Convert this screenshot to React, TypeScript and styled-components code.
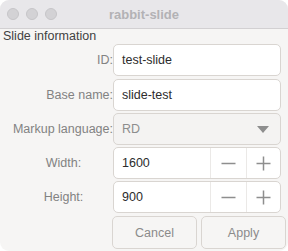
import React from "react";
import styled, { createGlobalStyle } from "styled-components";

const Global = createGlobalStyle`
  html, body { margin: 0; padding: 0; background: #ffffff; }
  body { font-family: "Liberation Sans", Arial, sans-serif; }
  * { box-sizing: border-box; }
`;

const Window = styled.div`
  width: 288px;
  height: 251px;
  background: #f6f5f4;
  border-radius: 9px;
  overflow: hidden;
  display: flex;
  flex-direction: column;
`;

const TitleBar = styled.div`
  height: 29px;
  flex: none;
  background: #e8e7ea;
  border-bottom: 1px solid #d2d0d2;
  display: flex;
  align-items: center;
  position: relative;
  padding-left: 7px;
  gap: 7px;
`;

const Light = styled.span`
  width: 12px;
  height: 12px;
  border-radius: 50%;
  background: #d3d2d5;
  border: 1px solid #c6c5c8;
`;

const Title = styled.div`
  position: absolute;
  left: 0;
  right: 0;
  top: 0;
  bottom: 0;
  display: flex;
  align-items: center;
  justify-content: center;
  font-weight: bold;
  font-size: 13px;
  color: #b3b2b5;
  pointer-events: none;
`;

const Content = styled.div`
  display: flex;
  flex-direction: column;
`;

const Section = styled.div`
  height: 14px;
  line-height: 14px;
  font-size: 12.5px;
  color: #424242;
  padding-left: 3px;
`;

const Form = styled.div`
  display: flex;
  flex-direction: column;
  gap: 2px;
`;

const Row = styled.div<{ $top?: number }>`
  display: flex;
  align-items: center;
  height: 32px;
  margin-top: ${(p) => p.$top ?? 0}px;
`;

const Label = styled.div<{ $center?: boolean }>`
  width: 113px;
  flex: none;
  font-size: 12.5px;
  color: #828282;
  text-align: ${(p) => (p.$center ? "center" : "right")};
  padding-left: ${(p) => (p.$center ? "14px" : "0")};
  white-space: nowrap;
`;

const Field = styled.div<{ $disabled?: boolean }>`
  width: 168px;
  height: 32px;
  flex: none;
  display: flex;
  align-items: stretch;
  background: ${(p) => (p.$disabled ? "#f4f3f2" : "#ffffff")};
  border: 1px solid #d9d5d1;
  border-radius: 5px;
  overflow: hidden;
`;

const Value = styled.div<{ $muted?: boolean }>`
  flex: 1;
  display: flex;
  align-items: center;
  padding-left: 8px;
  font-size: 12.5px;
  color: ${(p) => (p.$muted ? "#8d8d8d" : "#2c2c2c")};
`;

const Arrow = styled.div`
  width: 36px;
  display: flex;
  align-items: center;
  justify-content: center;
  padding-left: 2px;
`;

const SpinBtn = styled.div<{ $w: number }>`
  width: ${(p) => p.$w}px;
  flex: none;
  border-left: 1px solid #ebe9e7;
  display: flex;
  align-items: center;
  justify-content: center;
`;

const Buttons = styled.div`
  display: flex;
  gap: 4px;
  margin-left: 112px;
  margin-top: 1px;
  height: 33px;
`;

const Button = styled.div`
  width: 85px;
  height: 33px;
  border: 1px solid #d9d5d1;
  border-radius: 5px;
  background: #f6f5f4;
  display: flex;
  align-items: center;
  justify-content: center;
  font-size: 12.5px;
  color: #8b8b8b;
`;

const Minus = () => (
  <svg width="15" height="15" viewBox="0 0 15 15">
    <path d="M0.5 7.5h14" stroke="#8e8e8e" strokeWidth="1.5" />
  </svg>
);

const Plus = () => (
  <svg width="15" height="15" viewBox="0 0 15 15">
    <path d="M0.5 7.5h14M7.5 0.5v14" stroke="#8e8e8e" strokeWidth="1.5" />
  </svg>
);

const Spin = ({ value }: { value: string }) => (
  <Field>
    <Value>{value}</Value>
    <SpinBtn $w={36}>
      <Minus />
    </SpinBtn>
    <SpinBtn $w={34}>
      <Plus />
    </SpinBtn>
  </Field>
);

export default function App() {
  return (
    <>
      <Global />
      <Window>
        <TitleBar>
          <Light />
          <Light />
          <Light />
          <Title>rabbit-slide</Title>
        </TitleBar>
        <Content>
          <Section>Slide information</Section>
          <Form>
            <Row $top={1}>
              <Label>ID:</Label>
              <Field>
                <Value>test-slide</Value>
              </Field>
            </Row>
            <Row $top={1}>
              <Label>Base name:</Label>
              <Field>
                <Value>slide-test</Value>
              </Field>
            </Row>
            <Row>
              <Label>Markup language:</Label>
              <Field $disabled>
                <Value $muted>RD</Value>
                <Arrow>
                  <svg width="12" height="7" viewBox="0 0 12 7">
                    <path d="M0 0h12L6 7z" fill="#8e8e8e" />
                  </svg>
                </Arrow>
              </Field>
            </Row>
            <Row>
              <Label $center>Width:</Label>
              <Spin value="1600" />
            </Row>
            <Row>
              <Label $center>Height:</Label>
              <Spin value="900" />
            </Row>
            <Buttons>
              <Button>Cancel</Button>
              <Button>Apply</Button>
            </Buttons>
          </Form>
        </Content>
      </Window>
    </>
  );
}
